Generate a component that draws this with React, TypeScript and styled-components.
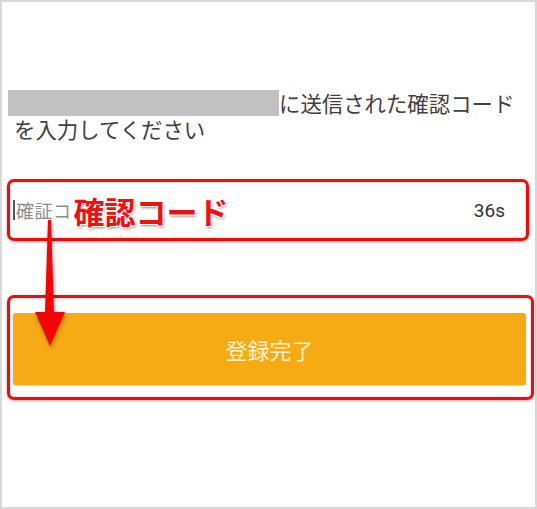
import React from 'react';
import styled, { createGlobalStyle } from 'styled-components';

const GlobalStyle = createGlobalStyle`
  html, body {
    margin: 0;
    padding: 0;
    background: #ffffff;
  }
  * {
    box-sizing: border-box;
  }
`

const Frame = styled.div`
  position: relative;
  width: 537px;
  height: 509px;
  border: 2px solid #d9d9d9;
  background-color: #ffffff;
  padding: 88px 0 0 5px;
  font-family: "Noto Sans CJK JP", "Noto Sans", sans-serif;
`

const Message = styled.p`
  margin: 0;
  padding-left: 7px;
  font-size: 21.4px;
  line-height: 26px;
  color: #404040;
`

const Redacted = styled.span`
  display: inline-block;
  width: 271px;
  height: 26px;
  margin-left: -6px;
  vertical-align: top;
  background-color: #c1c1c1;
`

const Highlight = styled.div<{ $gapRight: number }>`
  margin-right: ${(p) => p.$gapRight}px;
  border: 3px solid #ea0d0d;
  border-radius: 7px;
  box-shadow: 0 1px 3px rgba(0, 0, 0, 0.35), inset 0 0 3px rgba(0, 0, 0, 0.25);
`

const InputBox = styled(Highlight)`
  margin-top: 37px;
  height: 62px;
  display: flex;
  align-items: center;
  padding: 0 21px 0 3px;
`

const Caret = styled.span`
  width: 2px;
  height: 20px;
  margin-right: 1px;
  background-color: #555555;
`

const Placeholder = styled.span`
  font-size: 18px;
  color: #8c8c8c;
  letter-spacing: 0.5px;
`

const Label = styled.span`
  margin-left: 2px;
  font-size: 31px;
  font-weight: 700;
  line-height: 1;
  color: #ee1111;
  text-shadow: -1px -1px 0 #fff, 1px -1px 0 #fff, -1px 1px 0 #fff, 1px 1px 0 #fff,
    1px 2px 3px rgba(0, 0, 0, 0.45);
`

const Timer = styled.span`
  margin-left: auto;
  font-family: Roboto, "Liberation Sans", sans-serif;
  font-size: 19px;
  color: #333333;
`

const ButtonBox = styled(Highlight)`
  margin-top: 54px;
  padding: 15px 5px 12px 3px;
`

const SubmitButton = styled.button`
  display: block;
  width: 100%;
  height: 72px;
  border: none;
  border-radius: 3px;
  background-color: #f6ab14;
  box-shadow: 0 1px 2px rgba(0, 0, 0, 0.2);
  font-family: "Noto Sans CJK JP", sans-serif;
  font-size: 22px;
  color: #fdf1cc;
  cursor: pointer;
`

const Arrow = styled.svg`
  position: absolute;
  left: 28px;
  top: 216px;
  filter: drop-shadow(1px 2px 2px rgba(0, 0, 0, 0.35));
`

export default function App() {
  return (
    <>
      <GlobalStyle />
      <Frame>
        <Message>
          <Redacted />に送信された確認コード
          <br />
          を入力してください
        </Message>
        <InputBox $gapRight={6}>
          <Caret />
          <Placeholder>確証コ</Placeholder>
          <Label>確認コード</Label>
          <Timer>36s</Timer>
        </InputBox>
        <ButtonBox $gapRight={1}>
          <SubmitButton>登録完了</SubmitButton>
        </ButtonBox>
        <Arrow width="40" height="132" viewBox="0 0 40 132">
          <path d="M18 2 L21 2 L24 94 L35 94 L20 128 L5 94 L15 94 Z" fill="#f20505" />
        </Arrow>
      </Frame>
    </>
  );
}
